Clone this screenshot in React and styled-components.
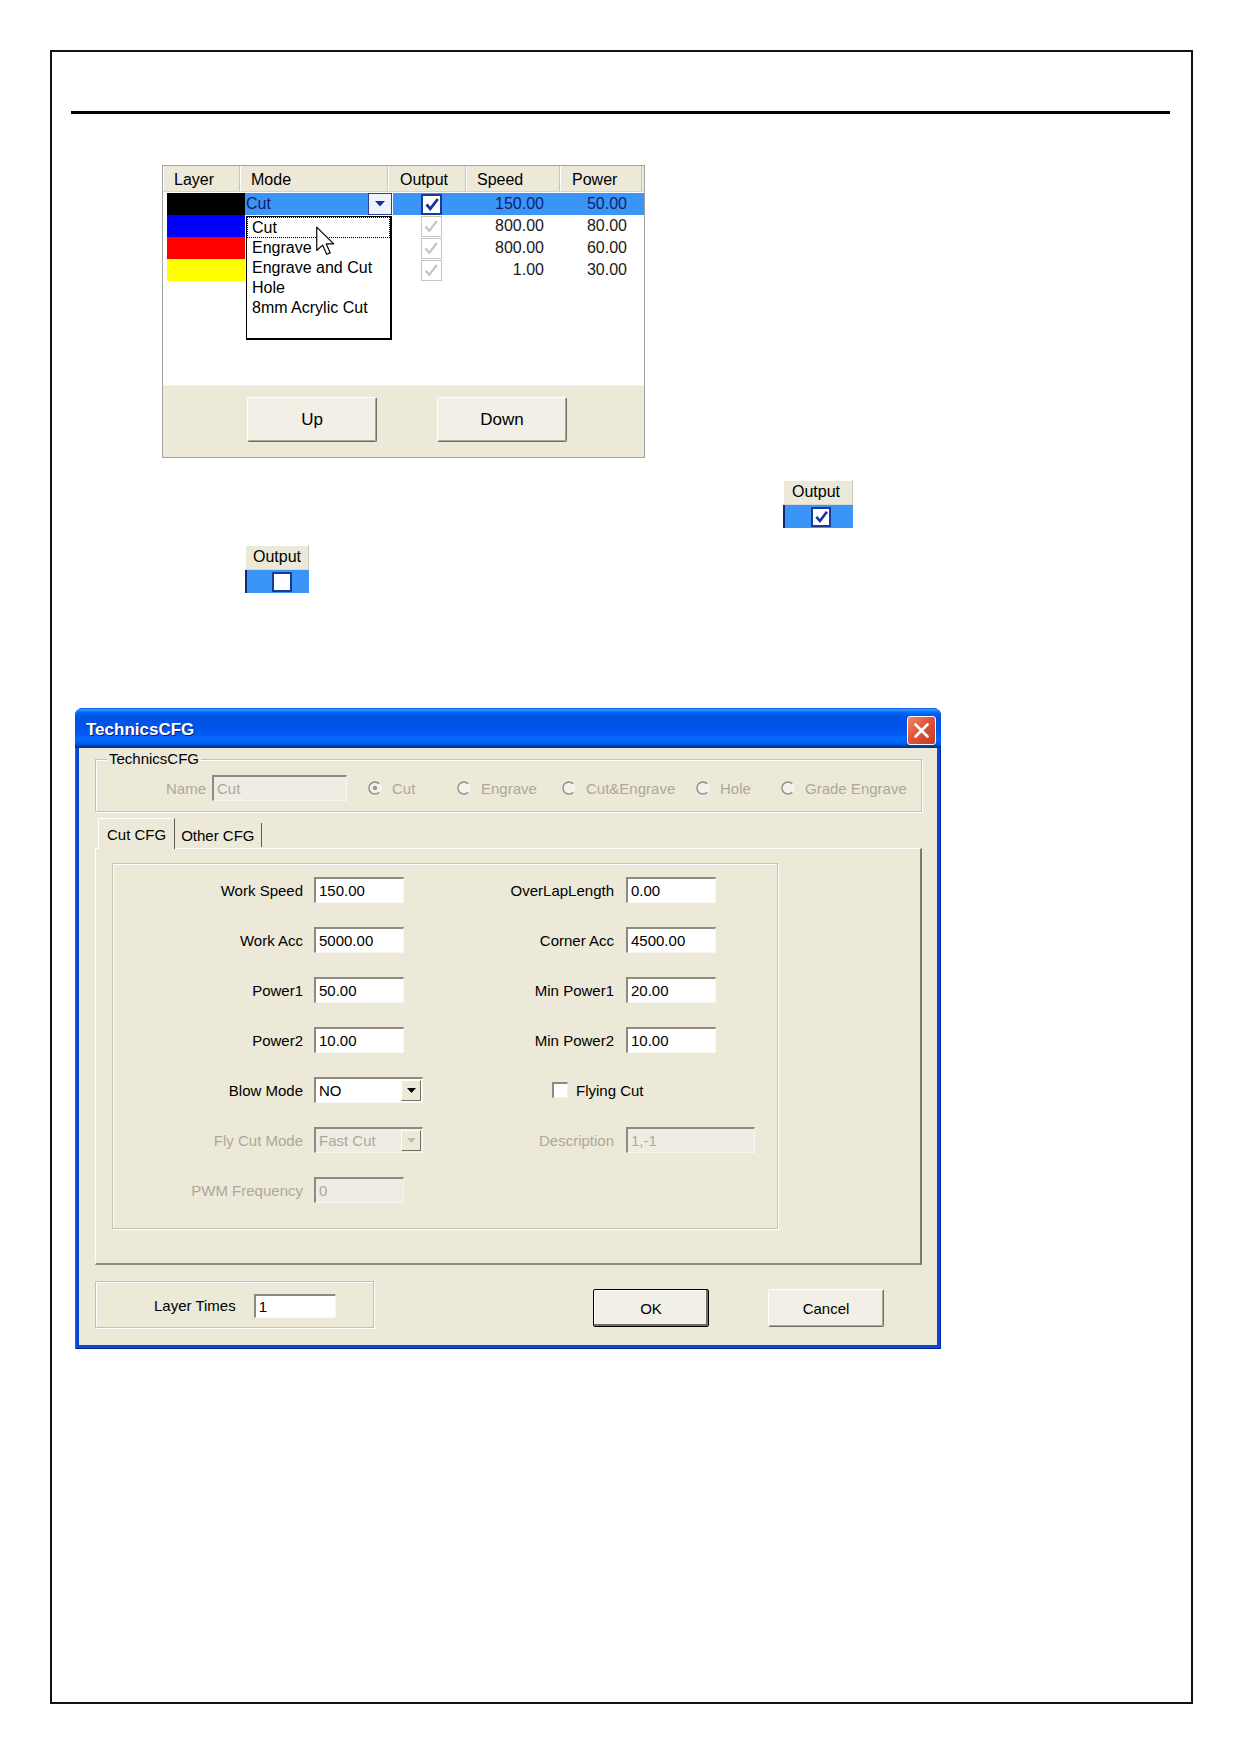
import React from 'react';
import styled, { createGlobalStyle } from 'styled-components';

const XP_BG = '#ECE9D8';
const SEL = '#3A95F7';
const DISABLED = '#ACA899';
const NAVY = '#1A3A9A';

const GlobalStyle = createGlobalStyle`
  * { box-sizing: border-box; }
  html, body { margin: 0; padding: 0; background: #fff; }
  body { font-family: "Liberation Sans", Arial, sans-serif; color: #000; }
`;

const Page = styled.div`
  padding: 50px 0 50px 50px;
`;

const Frame = styled.div`
  width: 1143px;
  height: 1654px;
  border: 2px solid #111;
  display: flex;
  flex-direction: column;
  align-items: flex-start;
`;

const Rule = styled.div`
  align-self: stretch;
  height: 3px;
  background: #000;
  margin: 59px 21px 0 19px;
`;

/* ---------- layer table screenshot ---------- */

const LayerTable = styled.div`
  position: relative;
  width: 483px;
  height: 293px;
  margin: 51px 0 0 110px;
  border: 1px solid #a3a3a3;
  background: #fff;
  display: flex;
  flex-direction: column;
`;

const HeaderRow = styled.div`
  display: grid;
  grid-template-columns: 77px 148px 78px 94px 82px 1fr;
  height: 26px;
  background: ${XP_BG};
  border-bottom: 1px solid #d8d5c6;
`;

const HeaderCell = styled.div`
  display: flex;
  align-items: flex-end;
  padding: 0 0 2px ${(p) => p.$pad || 11}px;
  font-size: 16px;
  border-right: 1px solid #c9c6b5;
  box-shadow: inset 1px 0 0 #fff;
`;

const Rows = styled.div`
  flex: 1;
  padding: 1px 0 0 4px;
`;

const Row = styled.div`
  display: grid;
  grid-template-columns: 78px 147px 78px 82px 83px 1fr;
  height: 22px;
  font-size: 16px;
  line-height: 22px;
  color: ${(p) => (p.$selected ? '#0b1f6b' : '#1a1a1a')};
`;

const Swatch = styled.div`
  background: ${(p) => p.$color};
`;

const Cell = styled.div`
  display: flex;
  align-items: center;
  justify-content: ${(p) => p.$align || 'flex-start'};
  padding-right: ${(p) => (p.$align === 'flex-end' ? 8 : 0)}px;
  background: ${(p) => (p.$selected ? SEL : 'transparent')};
  border-left: ${(p) => (p.$gap ? '1px solid #fff' : 'none')};
`;

const ModeText = styled.div`
  flex: 1;
  height: 100%;
  padding-left: 1px;
  background: ${SEL};
`;

const DropBtn = styled.div`
  width: 24px;
  height: 22px;
  border: 1px solid #2a3f9a;
  background: #eef3fd;
  display: flex;
  align-items: center;
  justify-content: center;
`;

const DropList = styled.div`
  position: absolute;
  left: 83px;
  top: 50px;
  width: 146px;
  height: 124px;
  background: #fff;
  border: 1px solid #000;
  border-right-width: 2px;
  border-bottom-width: 2px;
  font-size: 16px;
  z-index: 2;
`;

const DropItem = styled.div`
  height: ${(p) => (p.$focus ? 21 : 20)}px;
  line-height: 20px;
  padding-left: 4px;
  border: ${(p) => (p.$focus ? '1px dotted #000' : 'none')};
  margin-left: ${(p) => (p.$focus ? 0 : 1)}px;
`;

const Cursor = styled.svg`
  position: absolute;
  left: 153px;
  top: 59px;
  z-index: 3;
`;

const ButtonBar = styled.div`
  height: 72px;
  background: ${XP_BG};
  border-top: 1px solid #f5f3ea;
  display: flex;
  gap: 60px;
  padding: 11px 0 0 84px;
`;

const XPButton = styled.div`
  width: ${(p) => p.$w}px;
  height: ${(p) => p.$h}px;
  display: flex;
  align-items: center;
  justify-content: center;
  font-size: ${(p) => p.$fs || 15}px;
  background: #f1efe6;
  border: 1px solid;
  border-color: ${(p) => (p.$default ? '#000' : '#fff #716F64 #716F64 #fff')};
  border-radius: 2px;
  box-shadow: ${(p) =>
    p.$default
      ? 'inset -2px -2px 0 #716F64, inset 1px 1px 0 #fff'
      : 'inset -1px -1px 0 #ACA899'};
`;

/* ---------- output snippets ---------- */

const Snip = styled.div`
  width: ${(p) => p.$w}px;
  margin: ${(p) => p.$mt}px 0 0 ${(p) => p.$ml}px;
`;

const SnipHead = styled.div`
  height: 25px;
  background: ${XP_BG};
  font-size: 16px;
  line-height: 24px;
  padding-left: ${(p) => p.$pad}px;
  border-right: 1px solid #cfcbbb;
  border-bottom: 1px solid #dcd9ca;
  box-shadow: inset 1px 1px 0 #fff;
`;

const SnipRow = styled.div`
  height: 23px;
  display: flex;
  align-items: center;
  background: ${SEL};
  border-left: 2px solid #14286e;
  padding-left: ${(p) => p.$off}px;
`;

const CheckBoxBox = styled.div`
  width: ${(p) => p.$size}px;
  height: ${(p) => p.$size}px;
  background: #fff;
  border: ${(p) => (p.$disabled ? '1px solid #c9c7bd' : `2px solid ${NAVY}`)};
  display: flex;
  align-items: center;
  justify-content: center;
`;

function Check({ checked, disabled, size = 21 }) {
  const color = disabled ? '#c4c4c4' : '#1c2f9e';
  return (
    <CheckBoxBox $size={size} $disabled={disabled}>
      {checked && (
        <svg width={size - 5} height={size - 5} viewBox="0 0 16 16">
          <path d="M2.5 8.5 L6.3 12.8 L13.8 3" fill="none" stroke={color} strokeWidth={disabled ? 2.2 : 2.8} />
        </svg>
      )}
    </CheckBoxBox>
  );
}

/* ---------- TechnicsCFG dialog ---------- */

const Window = styled.div`
  width: 866px;
  height: 641px;
  margin: 115px 0 0 23px;
  background: #0a46d8;
  border-radius: 8px 8px 0 0;
  display: flex;
  flex-direction: column;
  overflow: hidden;
  box-shadow: inset 1px 0 0 #2d66e6, inset -1px 0 0 #0031b0, inset 0 -1px 0 #00259a;
`;

const TitleBar = styled.div`
  height: 40px;
  flex: none;
  display: flex;
  align-items: center;
  justify-content: space-between;
  padding: 0 5px 0 11px;
  background: linear-gradient(
    to bottom,
    #0058ee 0%,
    #3593ff 4%,
    #288eff 6%,
    #127dff 8%,
    #036ffc 10%,
    #0262ee 14%,
    #0057e5 20%,
    #0054e3 24%,
    #0055eb 56%,
    #005bf5 66%,
    #026afe 76%,
    #0062ef 86%,
    #0052d6 92%,
    #0040ab 94%,
    #003092 100%
  );
`;

const Title = styled.span`
  color: #fff;
  font-weight: bold;
  font-size: 17px;
  padding-top: 4px;
  text-shadow: 1px 1px 0 #0a1a7a;
`;

const CloseBtn = styled.div`
  width: 29px;
  height: 29px;
  margin-top: 5px;
  border: 1px solid #fff;
  border-radius: 3px;
  background: linear-gradient(135deg, #ee8a6c 0%, #e0553a 45%, #c63a1d 100%);
  display: flex;
  align-items: center;
  justify-content: center;
`;

const Client = styled.div`
  flex: 1;
  margin: 0 4px 4px;
  background: ${XP_BG};
  padding: 11px 15px 15px 16px;
  display: flex;
  flex-direction: column;
  font-size: 15px;
`;

const Etched = styled.div`
  position: relative;
  border: 1px solid #c4c1b1;
  box-shadow: inset 1px 1px 0 #fff, 1px 1px 0 #fff;
`;

const GroupLabel = styled.span`
  position: absolute;
  left: 11px;
  top: -10px;
  padding: 0 2px;
  background: ${XP_BG};
  line-height: 18px;
`;

const NameGroup = styled(Etched)`
  height: 53px;
  display: flex;
  align-items: center;
  padding: 5px 0 0 70px;
`;

const Muted = styled.span`
  color: ${DISABLED};
`;

const Field = styled.div`
  flex: none;
  width: ${(p) => p.$w}px;
  height: ${(p) => p.$h || 26}px;
  margin-left: ${(p) => p.$ml || 0}px;
  background: ${(p) => (p.$disabled ? '#efede3' : '#fff')};
  color: ${(p) => (p.$disabled ? DISABLED : '#000')};
  border-top: 2px solid #8e8b7e;
  border-left: 2px solid #8e8b7e;
  border-right: 1px solid #f7f6f1;
  border-bottom: 1px solid #f7f6f1;
  padding-left: 3px;
  display: flex;
  align-items: center;
  justify-content: space-between;
  font-size: 15px;
`;

const SelArrow = styled.div`
  width: 20px;
  height: 21px;
  margin-right: 1px;
  background: ${XP_BG};
  border: 1px solid;
  border-color: #fff #716f64 #716f64 #fff;
  display: flex;
  align-items: center;
  justify-content: center;
`;

const RadioItem = styled.div`
  flex: none;
  width: ${(p) => (p.$w ? `${p.$w}px` : 'auto')};
  display: flex;
  align-items: center;
  gap: 10px;
  color: ${DISABLED};
`;

const RadioRow = styled.div`
  display: flex;
  margin-left: 21px;
`;

function Radio({ label, checked, w }) {
  return (
    <RadioItem $w={w}>
      <svg width="14" height="14" viewBox="0 0 14 14">
        <circle cx="7" cy="7" r="6" fill="#f3f2ec" stroke="#fbfbf8" strokeWidth="1" />
        <path d="M11.2 2.8 A6 6 0 1 0 11.2 11.2" fill="none" stroke="#8f8c80" strokeWidth="1.4" />
        {checked && <circle cx="7" cy="7" r="2.2" fill="#9d9a8c" />}
      </svg>
      {label}
    </RadioItem>
  );
}

const Tabs = styled.div`
  margin-top: 6px;
  display: flex;
  flex-direction: column;
`;

const TabStrip = styled.div`
  height: 30px;
  display: flex;
  align-items: flex-end;
  padding-left: 3px;
  position: relative;
  z-index: 1;
`;

const Tab = styled.div`
  height: ${(p) => (p.$active ? 31 : 24)}px;
  margin-bottom: ${(p) => (p.$active ? -1 : 1)}px;
  align-self: ${(p) => (p.$active ? 'flex-start' : 'flex-end')};
  padding: 0 ${(p) => (p.$active ? 8 : 6)}px;
  display: flex;
  align-items: center;
  background: ${XP_BG};
  border-top: ${(p) => (p.$active ? '1px solid #fff' : 'none')};
  border-left: ${(p) => (p.$active ? '1px solid #fff' : 'none')};
  border-right: 1px solid #5e5c52;
`;

const TabPanel = styled.div`
  height: 417px;
  border-top: 1px solid #fff;
  border-left: 1px solid #fff;
  border-right: 2px solid #7a7868;
  border-bottom: 2px solid #8d8b7c;
  padding: 14px 0 0 16px;
`;

const FormBox = styled(Etched)`
  width: 666px;
  height: 366px;
  padding-top: 13px;
`;

const FormGrid = styled.div`
  display: grid;
  grid-template-columns: 190px 120px 191px 1fr;
  grid-auto-rows: 26px;
  row-gap: 24px;
  align-items: center;
`;

const Label = styled.div`
  grid-column: ${(p) => p.$col};
  text-align: right;
  color: ${(p) => (p.$disabled ? DISABLED : '#000')};
`;

const FlyCheck = styled.div`
  grid-column: 3 / 5;
  padding-left: 129px;
  display: flex;
  align-items: center;
  gap: 8px;
`;

const SunkenBox = styled.div`
  width: 16px;
  height: 16px;
  background: #fff;
  border-top: 2px solid #8e8b7e;
  border-left: 2px solid #8e8b7e;
  border-right: 1px solid #f3f2ec;
  border-bottom: 1px solid #f3f2ec;
`;

const BottomRow = styled.div`
  margin-top: 16px;
  height: 47px;
  display: flex;
  align-items: flex-start;
`;

const LayerBox = styled(Etched)`
  width: 279px;
  height: 47px;
  display: flex;
  align-items: center;
  gap: 18px;
  padding: 2px 0 0 58px;
`;

const ButtonSlot = styled.div`
  margin: 8px 0 0 ${(p) => p.$ml}px;
`;

function Triangle({ color = '#000', w = 9 }) {
  return (
    <svg width={w} height={w / 2 + 1} viewBox="0 0 10 6">
      <polygon points="0,0 10,0 5,5.5" fill={color} />
    </svg>
  );
}

function Select({ value, w, disabled }) {
  return (
    <Field $w={w} $ml={11} $disabled={disabled}>
      {value}
      <SelArrow>
        <Triangle color={disabled ? '#bdbab0' : '#000'} w={9} />
      </SelArrow>
    </Field>
  );
}

const layers = [
  { color: '#000000', speed: '150.00', power: '50.00', selected: true },
  { color: '#0000ff', speed: '800.00', power: '80.00' },
  { color: '#ff0000', speed: '800.00', power: '60.00' },
  { color: '#ffff00', speed: '1.00', power: '30.00' },
];

const modes = ['Cut', 'Engrave', 'Engrave and Cut', 'Hole', '8mm Acrylic Cut'];

const App = () => {
  return (
    <Page>
      <GlobalStyle />
      <Frame>
        <Rule />

        <LayerTable>
          <HeaderRow>
            <HeaderCell>Layer</HeaderCell>
            <HeaderCell>Mode</HeaderCell>
            <HeaderCell $pad={12}>Output</HeaderCell>
            <HeaderCell>Speed</HeaderCell>
            <HeaderCell $pad={12}>Power</HeaderCell>
            <div />
          </HeaderRow>
          <Rows>
            {layers.map((l, i) => (
              <Row key={i} $selected={l.selected}>
                <Swatch $color={l.color} />
                {l.selected ? (
                  <Cell>
                    <ModeText>Cut</ModeText>
                    <DropBtn>
                      <Triangle color="#1c2f9e" w={10} />
                    </DropBtn>
                  </Cell>
                ) : (
                  <Cell />
                )}
                <Cell $selected={l.selected} $gap={l.selected} $align="center">
                  <Check checked disabled={!l.selected} size={21} />
                </Cell>
                <Cell $selected={l.selected} $align="flex-end">{l.speed}</Cell>
                <Cell $selected={l.selected} $align="flex-end">{l.power}</Cell>
                <Cell $selected={l.selected} />
              </Row>
            ))}
          </Rows>
          <DropList>
            {modes.map((m, i) => (
              <DropItem key={m} $focus={i === 0}>
                {m}
              </DropItem>
            ))}
          </DropList>
          <Cursor width="19" height="32" viewBox="-0.5 -0.5 13 20">
            <polygon
              points="0,0 0,16 4,12.3 6.8,18.6 9.2,17.6 6.5,11.5 11.6,11.5"
              fill="#fff"
              stroke="#000"
              strokeWidth="0.8"
              strokeLinejoin="round"
            />
          </Cursor>
          <ButtonBar>
            <XPButton $w={130} $h={45} $fs={17}>Up</XPButton>
            <XPButton $w={130} $h={45} $fs={17}>Down</XPButton>
          </ButtonBar>
        </LayerTable>

        <Snip $w={70} $mt={22} $ml={731}>
          <SnipHead $pad={9}>Output</SnipHead>
          <SnipRow $off={26}>
            <Check checked size={20} />
          </SnipRow>
        </Snip>

        <Snip $w={64} $mt={17} $ml={193}>
          <SnipHead $pad={8}>Output</SnipHead>
          <SnipRow $off={25}>
            <Check size={20} />
          </SnipRow>
        </Snip>

        <Window>
          <TitleBar>
            <Title>TechnicsCFG</Title>
            <CloseBtn>
              <svg width="17" height="17" viewBox="0 0 17 17">
                <path d="M2.5 2.5 L14.5 14.5 M14.5 2.5 L2.5 14.5" stroke="#fff" strokeWidth="2.6" strokeLinecap="round" />
              </svg>
            </CloseBtn>
          </TitleBar>
          <Client>
            <NameGroup>
              <GroupLabel>TechnicsCFG</GroupLabel>
              <Muted>Name</Muted>
              <Field $w={135} $ml={6} $disabled>
                Cut
              </Field>
              <RadioRow>
                <Radio label="Cut" checked w={89} />
                <Radio label="Engrave" w={105} />
                <Radio label="Cut&Engrave" w={134} />
                <Radio label="Hole" w={85} />
                <Radio label="Grade Engrave" />
              </RadioRow>
            </NameGroup>

            <Tabs>
              <TabStrip>
                <Tab $active>Cut CFG</Tab>
                <Tab>Other CFG</Tab>
              </TabStrip>
              <TabPanel>
                <FormBox>
                  <FormGrid>
                    <Label $col={1}>Work Speed</Label>
                    <Field $w={90} $ml={11}>150.00</Field>
                    <Label $col={3}>OverLapLength</Label>
                    <Field $w={90} $ml={12}>0.00</Field>

                    <Label $col={1}>Work Acc</Label>
                    <Field $w={90} $ml={11}>5000.00</Field>
                    <Label $col={3}>Corner Acc</Label>
                    <Field $w={90} $ml={12}>4500.00</Field>

                    <Label $col={1}>Power1</Label>
                    <Field $w={90} $ml={11}>50.00</Field>
                    <Label $col={3}>Min Power1</Label>
                    <Field $w={90} $ml={12}>20.00</Field>

                    <Label $col={1}>Power2</Label>
                    <Field $w={90} $ml={11}>10.00</Field>
                    <Label $col={3}>Min Power2</Label>
                    <Field $w={90} $ml={12}>10.00</Field>

                    <Label $col={1}>Blow Mode</Label>
                    <Select value="NO" w={109} />
                    <FlyCheck>
                      <SunkenBox />
                      Flying Cut
                    </FlyCheck>

                    <Label $col={1} $disabled>Fly Cut Mode</Label>
                    <Select value="Fast Cut" w={109} disabled />
                    <Label $col={3} $disabled>Description</Label>
                    <Field $w={129} $ml={12} $disabled>1,-1</Field>

                    <Label $col={1} $disabled>PWM Frequency</Label>
                    <Field $w={90} $ml={11} $disabled>0</Field>
                  </FormGrid>
                </FormBox>
              </TabPanel>
            </Tabs>

            <BottomRow>
              <LayerBox>
                Layer Times
                <Field $w={82} $h={24}>1</Field>
              </LayerBox>
              <ButtonSlot $ml={219}>
                <XPButton $w={116} $h={38} $default>OK</XPButton>
              </ButtonSlot>
              <ButtonSlot $ml={59}>
                <XPButton $w={116} $h={38}>Cancel</XPButton>
              </ButtonSlot>
            </BottomRow>
          </Client>
        </Window>
      </Frame>
    </Page>
  );
};

export default App;
